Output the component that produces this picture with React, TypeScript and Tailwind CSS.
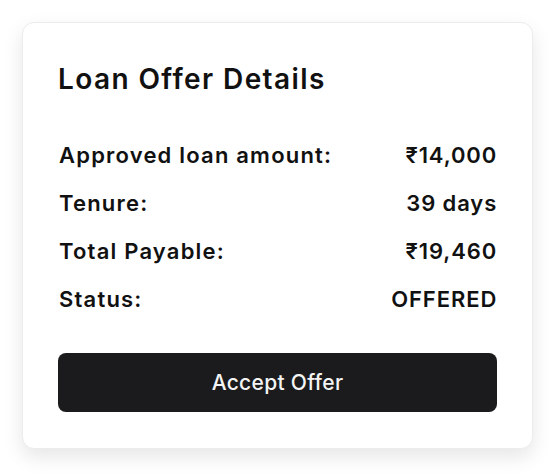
import React from "react";

export default function App() {
  const rows: [string, string][] = [
    ["Approved loan amount:", "₹14,000"],
    ["Tenure:", "39 days"],
    ["Total Payable:", "₹19,460"],
    ["Status:", "OFFERED"],
  ];
  return (
    <div
      className="w-[552px] h-[476px] bg-white pt-[22px] pl-[22px]"
      style={{ fontFamily: "Inter, 'Noto Sans', sans-serif" }}
    >
      <div className="w-[511px] h-[427px] bg-white rounded-[12px] border border-[#ececec] shadow-[0_8px_20px_rgba(0,0,0,0.10)] px-[35px] pt-[40px] flex flex-col">
        <h1 className="text-[28px] leading-[32px] font-semibold text-[#111] tracking-[1.4px]">
          Loan Offer Details
        </h1>
        <div className="mt-[48px] flex flex-col gap-[24px] px-[1px]">
          {rows.map(([k, v]) => (
            <div
              key={k}
              className="flex justify-between items-center text-[22px] leading-[24px] font-semibold text-[#111] tracking-[1.2px]"
            >
              <span>{k}</span>
              <span className="-mr-[1.2px] tracking-[0.9px]">{v}</span>
            </div>
          ))}
        </div>
        <button className="mt-[42px] h-[59px] w-full rounded-[8px] bg-[#1b1b1d] text-[#f4f4f4] text-[21px] font-medium tracking-[0.3px]">
          Accept Offer
        </button>
      </div>
    </div>
  );
}
